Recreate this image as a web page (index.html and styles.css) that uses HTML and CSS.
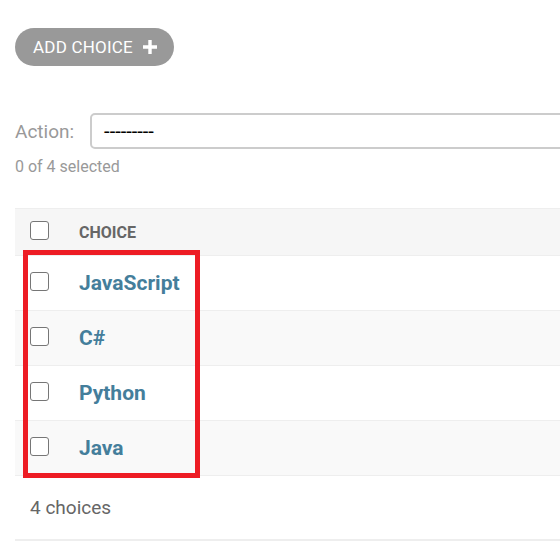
FILE: index.html
```html
<!DOCTYPE html>
<html>
<head>
<meta charset="utf-8">
<link rel="stylesheet" href="styles.css">
</head>
<body>
<div class="page">
  <div class="tools">
    <a class="add-btn" href="#">ADD CHOICE
      <svg class="plus" width="14" height="14" viewBox="0 0 14 14"><path d="M5.3 0h3.4v5.3H14v3.4H8.7V14H5.3V8.7H0V5.3h5.3z" fill="#fff"/></svg>
    </a>
  </div>
  <div class="actions">
    <label class="action-label">Action:</label>
    <div class="select"><span>---------</span></div>
  </div>
  <div class="counter">0 of 4 selected</div>
  <div class="results">
    <div class="row head">
      <div class="cb-cell"><span class="cb"></span></div>
      <div class="th">CHOICE</div>
    </div>
    <div class="row">
      <div class="cb-cell"><span class="cb"></span></div>
      <a class="link" href="#">JavaScript</a>
    </div>
    <div class="row alt">
      <div class="cb-cell"><span class="cb"></span></div>
      <a class="link" href="#">C#</a>
    </div>
    <div class="row">
      <div class="cb-cell"><span class="cb"></span></div>
      <a class="link" href="#">Python</a>
    </div>
    <div class="row alt">
      <div class="cb-cell"><span class="cb"></span></div>
      <a class="link" href="#">Java</a>
    </div>
    <div class="highlight"></div>
  </div>
  <div class="paginator">4 choices</div>
</div>
</body>
</html>
```
FILE: styles.css
```css
html, body {
  margin: 0;
  padding: 0;
  background: #fff;
  overflow: hidden;
}
body {
  font-family: Roboto, "Liberation Sans", sans-serif;
  color: #333;
}
.page {
  padding: 28px 0 0 15px;
  width: 700px;
}
.tools {
  display: flex;
}
.add-btn {
  display: inline-flex;
  align-items: center;
  height: 38px;
  padding: 0 17px 0 18px;
  border-radius: 19px;
  background: #999;
  color: #fff;
  font-size: 17px;
  letter-spacing: 0.2px;
  text-decoration: none;
  gap: 10px;
}
.actions {
  display: flex;
  align-items: center;
  gap: 16px;
  margin-top: 47px;
}
.action-label {
  font-size: 19px;
  color: #999;
}
.select {
  box-sizing: border-box;
  height: 36px;
  width: 600px;
  border: 2px solid #ccc;
  border-radius: 5px;
  display: flex;
  align-items: center;
  padding-left: 12px;
  font-size: 20px;
  color: #000;
}
.counter {
  margin-top: 8px;
  font-size: 16px;
  color: #999;
  line-height: 20px;
}
.results {
  position: relative;
  margin-top: 31px;
}
.row {
  display: flex;
  align-items: center;
  height: 55px;
  box-sizing: border-box;
  border-bottom: 1px solid #eee;
}
.row.head {
  height: 48px;
  border-top: 1px solid #eee;
  background: #f6f6f6;
}
.row.alt {
  background: #f9f9f9;
}
.cb-cell {
  width: 49px;
  padding-left: 15px;
  display: flex;
  align-items: center;
}
.cb {
  display: block;
  box-sizing: border-box;
  width: 19px;
  height: 19px;
  margin-bottom: 4px;
  border: 1.5px solid #767676;
  border-radius: 3px;
  background: #fff;
}
.th {
  font-size: 16px;
  font-weight: 700;
  color: #666;
}
.link {
  font-size: 21px;
  font-weight: 700;
  color: #447e9b;
  text-decoration: none;
}
.highlight {
  position: absolute;
  left: 8px;
  top: 42px;
  width: 177px;
  height: 228px;
  box-sizing: border-box;
  border: 5px solid #ed1c24;
}
.paginator {
  height: 65px;
  box-sizing: border-box;
  border-bottom: 2px solid #eee;
  padding-left: 15px;
  display: flex;
  align-items: center;
  font-size: 19px;
  color: #666;
}
```
